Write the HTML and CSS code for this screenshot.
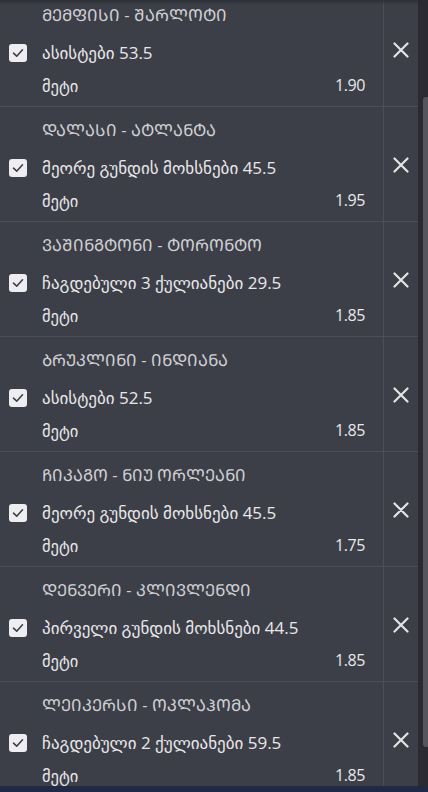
FILE: index.html
```html
<!DOCTYPE html>
<html lang="ka">
<head>
<meta charset="utf-8">
<link rel="stylesheet" href="styles.css">
</head>
<body>
<div class="panel">
  <div class="scroller">
    <div class="list">
      <div class="item">
        <div class="main">
          <div class="title">&#x1C9B;&#x1C94;&#x1C9B;&#x1CA4;&#x1C98;&#x1CA1;&#x1C98; - &#x1CA8;&#x1C90;&#x1CA0;&#x1C9A;&#x1C9D;&#x1CA2;&#x1C98;</div>
          <div class="bet"><span class="cb"><svg viewBox="0 0 18 18" width="18" height="18"><path d="M4.5 9.2 L7.7 12.2 L13.5 5.8" fill="none" stroke="#3d3f48" stroke-width="1.6" stroke-linecap="round" stroke-linejoin="round"/></svg></span><span>ასისტები 53.5</span></div>
          <div class="meta"><span>მეტი</span><span class="odds">1.90</span></div>
        </div>
        <div class="remove"><svg viewBox="0 0 16 16" width="16" height="16"><path d="M1.5 1.5 L14.5 14.5 M14.5 1.5 L1.5 14.5" stroke="#e4e4e6" stroke-width="2.2" stroke-linecap="round"/></svg></div>
      </div>
      <div class="item">
        <div class="main">
          <div class="title">&#x1C93;&#x1C90;&#x1C9A;&#x1C90;&#x1CA1;&#x1C98; - &#x1C90;&#x1CA2;&#x1C9A;&#x1C90;&#x1C9C;&#x1CA2;&#x1C90;</div>
          <div class="bet"><span class="cb"><svg viewBox="0 0 18 18" width="18" height="18"><path d="M4.5 9.2 L7.7 12.2 L13.5 5.8" fill="none" stroke="#3d3f48" stroke-width="1.6" stroke-linecap="round" stroke-linejoin="round"/></svg></span><span>მეორე გუნდის მოხსნები 45.5</span></div>
          <div class="meta"><span>მეტი</span><span class="odds">1.95</span></div>
        </div>
        <div class="remove"><svg viewBox="0 0 16 16" width="16" height="16"><path d="M1.5 1.5 L14.5 14.5 M14.5 1.5 L1.5 14.5" stroke="#e4e4e6" stroke-width="2.2" stroke-linecap="round"/></svg></div>
      </div>
      <div class="item">
        <div class="main">
          <div class="title">&#x1C95;&#x1C90;&#x1CA8;&#x1C98;&#x1C9C;&#x1C92;&#x1CA2;&#x1C9D;&#x1C9C;&#x1C98; - &#x1CA2;&#x1C9D;&#x1CA0;&#x1C9D;&#x1C9C;&#x1CA2;&#x1C9D;</div>
          <div class="bet"><span class="cb"><svg viewBox="0 0 18 18" width="18" height="18"><path d="M4.5 9.2 L7.7 12.2 L13.5 5.8" fill="none" stroke="#3d3f48" stroke-width="1.6" stroke-linecap="round" stroke-linejoin="round"/></svg></span><span>ჩაგდებული 3 ქულიანები 29.5</span></div>
          <div class="meta"><span>მეტი</span><span class="odds">1.85</span></div>
        </div>
        <div class="remove"><svg viewBox="0 0 16 16" width="16" height="16"><path d="M1.5 1.5 L14.5 14.5 M14.5 1.5 L1.5 14.5" stroke="#e4e4e6" stroke-width="2.2" stroke-linecap="round"/></svg></div>
      </div>
      <div class="item">
        <div class="main">
          <div class="title">&#x1C91;&#x1CA0;&#x1CA3;&#x1C99;&#x1C9A;&#x1C98;&#x1C9C;&#x1C98; - &#x1C98;&#x1C9C;&#x1C93;&#x1C98;&#x1C90;&#x1C9C;&#x1C90;</div>
          <div class="bet"><span class="cb"><svg viewBox="0 0 18 18" width="18" height="18"><path d="M4.5 9.2 L7.7 12.2 L13.5 5.8" fill="none" stroke="#3d3f48" stroke-width="1.6" stroke-linecap="round" stroke-linejoin="round"/></svg></span><span>ასისტები 52.5</span></div>
          <div class="meta"><span>მეტი</span><span class="odds">1.85</span></div>
        </div>
        <div class="remove"><svg viewBox="0 0 16 16" width="16" height="16"><path d="M1.5 1.5 L14.5 14.5 M14.5 1.5 L1.5 14.5" stroke="#e4e4e6" stroke-width="2.2" stroke-linecap="round"/></svg></div>
      </div>
      <div class="item">
        <div class="main">
          <div class="title">&#x1CA9;&#x1C98;&#x1C99;&#x1C90;&#x1C92;&#x1C9D; - &#x1C9C;&#x1C98;&#x1CA3; &#x1C9D;&#x1CA0;&#x1C9A;&#x1C94;&#x1C90;&#x1C9C;&#x1C98;</div>
          <div class="bet"><span class="cb"><svg viewBox="0 0 18 18" width="18" height="18"><path d="M4.5 9.2 L7.7 12.2 L13.5 5.8" fill="none" stroke="#3d3f48" stroke-width="1.6" stroke-linecap="round" stroke-linejoin="round"/></svg></span><span>მეორე გუნდის მოხსნები 45.5</span></div>
          <div class="meta"><span>მეტი</span><span class="odds">1.75</span></div>
        </div>
        <div class="remove"><svg viewBox="0 0 16 16" width="16" height="16"><path d="M1.5 1.5 L14.5 14.5 M14.5 1.5 L1.5 14.5" stroke="#e4e4e6" stroke-width="2.2" stroke-linecap="round"/></svg></div>
      </div>
      <div class="item">
        <div class="main">
          <div class="title">&#x1C93;&#x1C94;&#x1C9C;&#x1C95;&#x1C94;&#x1CA0;&#x1C98; - &#x1C99;&#x1C9A;&#x1C98;&#x1C95;&#x1C9A;&#x1C94;&#x1C9C;&#x1C93;&#x1C98;</div>
          <div class="bet"><span class="cb"><svg viewBox="0 0 18 18" width="18" height="18"><path d="M4.5 9.2 L7.7 12.2 L13.5 5.8" fill="none" stroke="#3d3f48" stroke-width="1.6" stroke-linecap="round" stroke-linejoin="round"/></svg></span><span>პირველი გუნდის მოხსნები 44.5</span></div>
          <div class="meta"><span>მეტი</span><span class="odds">1.85</span></div>
        </div>
        <div class="remove"><svg viewBox="0 0 16 16" width="16" height="16"><path d="M1.5 1.5 L14.5 14.5 M14.5 1.5 L1.5 14.5" stroke="#e4e4e6" stroke-width="2.2" stroke-linecap="round"/></svg></div>
      </div>
      <div class="item">
        <div class="main">
          <div class="title">&#x1C9A;&#x1C94;&#x1C98;&#x1C99;&#x1C94;&#x1CA0;&#x1CA1;&#x1C98; - &#x1C9D;&#x1C99;&#x1C9A;&#x1C90;&#x1CB0;&#x1C9D;&#x1C9B;&#x1C90;</div>
          <div class="bet"><span class="cb"><svg viewBox="0 0 18 18" width="18" height="18"><path d="M4.5 9.2 L7.7 12.2 L13.5 5.8" fill="none" stroke="#3d3f48" stroke-width="1.6" stroke-linecap="round" stroke-linejoin="round"/></svg></span><span>ჩაგდებული 2 ქულიანები 59.5</span></div>
          <div class="meta"><span>მეტი</span><span class="odds">1.85</span></div>
        </div>
        <div class="remove"><svg viewBox="0 0 16 16" width="16" height="16"><path d="M1.5 1.5 L14.5 14.5 M14.5 1.5 L1.5 14.5" stroke="#e4e4e6" stroke-width="2.2" stroke-linecap="round"/></svg></div>
      </div>
    </div>
  </div>
  <div class="scrollbar"><div class="thumb"></div></div>
</div>
<div class="bottom-strip"></div>
</body>
</html>
```
FILE: styles.css
```css
* { box-sizing: border-box; }
html, body {
  margin: 0;
  padding: 0;
  width: 428px;
  height: 792px;
  overflow: hidden;
  background: #3d3f48;
}
body {
  font-family: "Open Sans", "DejaVu Sans", sans-serif;
  color: #e8e8ea;
  display: flex;
  flex-direction: column;
}
.panel {
  position: relative;
  flex: 1;
  display: flex;
  min-height: 0;
  overflow: hidden;
}
.panel::before {
  content: "";
  position: absolute;
  left: 0; right: 10px; top: 0;
  height: 5px;
  background: linear-gradient(#2e3037, rgba(61,63,72,0));
  z-index: 2;
}
.scroller {
  flex: 1;
  min-width: 0;
  overflow: hidden;
}
.list {
  margin-top: -8px;
}
.item {
  display: flex;
  height: 115px;
  border-bottom: 1px solid #4d4f58;
}
.main {
  width: 384px;
  border-right: 1px solid #4d4f58;
  padding: 8px 18px 12px 9px;
  display: flex;
  flex-direction: column;
}
.title {
  line-height: 30px;
  height: 30px;
  font-size: 16.5px;
  color: #cfd0d4;
  padding-left: 33px;
  white-space: nowrap;
}
.bet {
  height: 46px;
  display: flex;
  align-items: center;
  gap: 15px;
  font-size: 17px;
  white-space: nowrap;
  padding-bottom: 2px;
}
.cb {
  width: 18px;
  height: 18px;
  border-radius: 3px;
  background: #eeeef2;
  display: flex;
  flex: none;
  margin-top: 2px;
}
.meta {
  height: 18px;
  display: flex;
  justify-content: space-between;
  align-items: center;
  padding-left: 33px;
  font-size: 16.5px;
}
.odds {
  font-size: 16px;
  letter-spacing: -0.4px;
}
.remove {
  flex: 1;
  display: flex;
  justify-content: center;
  align-items: flex-start;
  padding-top: 50px;
}
.scrollbar {
  width: 10px;
  flex: none;
  background: #2a2b30;
  position: relative;
}
.thumb {
  position: absolute;
  right: 0;
  top: 97px;
  width: 5px;
  height: 650px;
  background: #55565c;
  border-radius: 3px 0 0 3px;
}
.bottom-strip {
  height: 6px;
  flex: none;
  background: #1f2a44;
}
```
